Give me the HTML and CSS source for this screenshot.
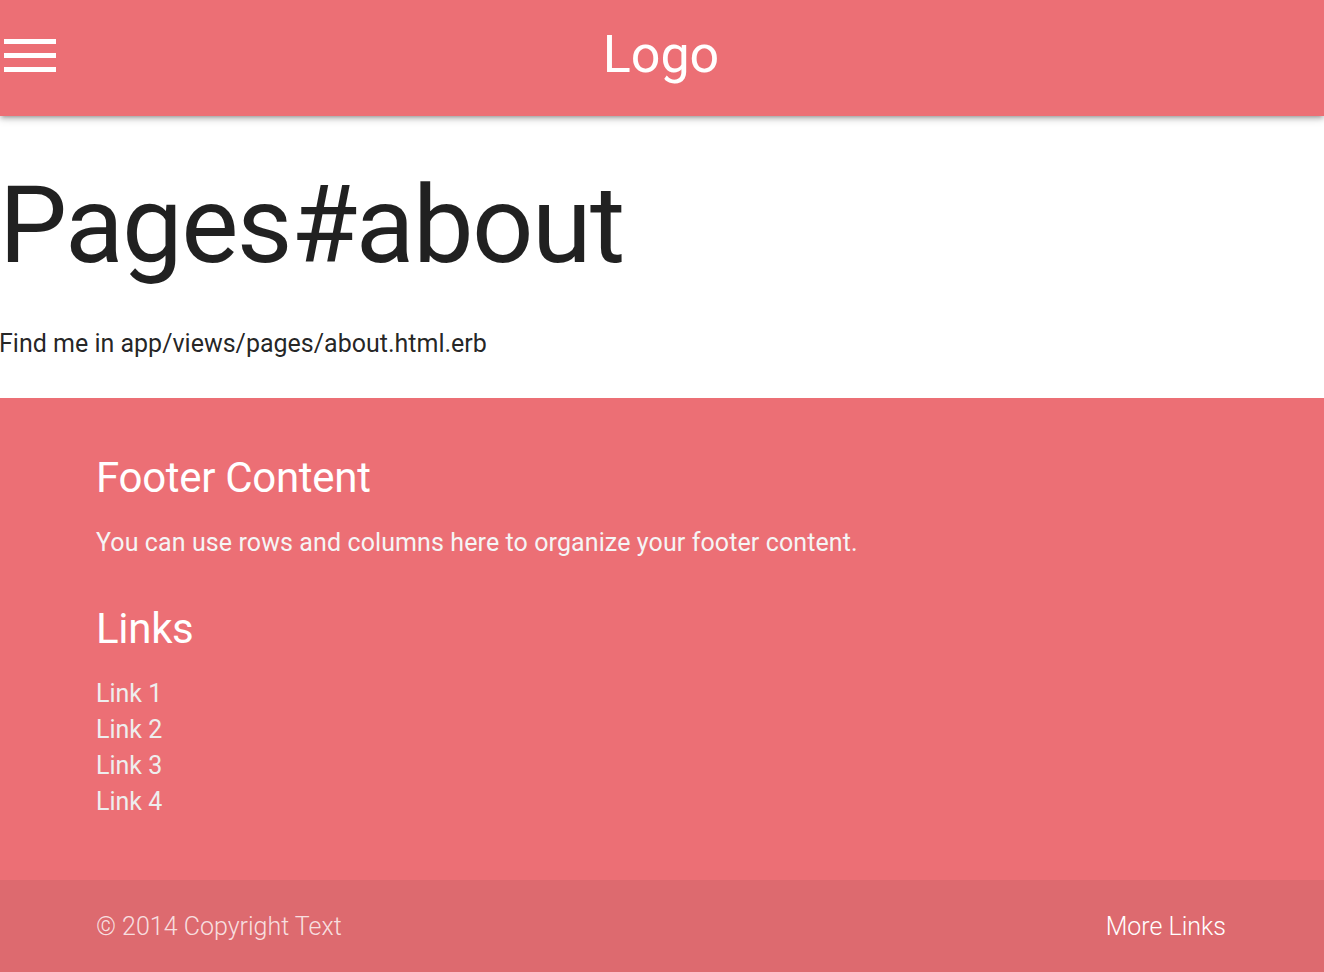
FILE: index.html
```html
<!DOCTYPE html>
<html lang="en">
<head>
    <meta charset="UTF-8">
    <meta name="viewport" content="width=device-width, initial-scale=1.0">
    <title>Pages#about</title>
    <link rel="stylesheet" href="styles.css">
</head>
<body>
    <nav class="nav">
        <a href="#" class="menu-toggle" aria-label="Menu">
            <span></span>
            <span></span>
            <span></span>
        </a>
        <a href="#" class="brand-logo">Logo</a>
        <div class="nav-spacer"></div>
    </nav>

    <main class="content">
        <h1>Pages#about</h1>
        <p>Find me in app/views/pages/about.html.erb</p>
    </main>

    <footer class="page-footer">
        <div class="footer-main">
            <h5>Footer Content</h5>
            <p class="footer-text">You can use rows and columns here to organize your footer content.</p>
            <h5 class="links-title">Links</h5>
            <ul class="footer-links">
                <li><a href="#">Link 1</a></li>
                <li><a href="#">Link 2</a></li>
                <li><a href="#">Link 3</a></li>
                <li><a href="#">Link 4</a></li>
            </ul>
        </div>
        <div class="footer-copyright">
            <span>© 2014 Copyright Text</span>
            <a href="#">More Links</a>
        </div>
    </footer>
</body>
</html>
```

FILE: styles.css
```css
body {
    font-family: Roboto, "Liberation Sans", sans-serif;
    margin: 0;
    background: #fff;
    color: rgba(0, 0, 0, 0.87);
    overflow: hidden;
}

a {
    text-decoration: none;
}

.nav {
    display: grid;
    grid-template-columns: 1fr auto 1fr;
    height: 116px;
    background-color: #ec6f75;
    box-shadow: 0 3px 4px 0 rgba(0, 0, 0, 0.14), 0 4px 2px -3px rgba(0, 0, 0, 0.12), 0 2px 9px 0 rgba(0, 0, 0, 0.2);
    position: relative;
    z-index: 1;
}

.menu-toggle {
    display: flex;
    flex-direction: column;
    gap: 9px;
    width: 52px;
    margin: 39px 0 0 4px;
    align-self: start;
}

.menu-toggle span {
    display: block;
    height: 5px;
    background: #fff;
}

.brand-logo {
    color: #fff;
    font-size: 52px;
    line-height: 110px;
    margin-left: -2px;
}

h1 {
    font-size: 108px;
    font-weight: 400;
    line-height: 1.1;
    margin: 50px 0 41px -1px;
    letter-spacing: -1.6px;
}

.content p {
    font-size: 25px;
    line-height: 36px;
    margin: 0 0 36px -1px;
}

.page-footer {
    background-color: #ec6f75;
}

.footer-main {
    padding: 57px 96px 60px;
}

h5 {
    color: #fff;
    font-size: 42px;
    font-weight: 400;
    line-height: 1.1;
    margin: 0 0 24px;
    letter-spacing: -0.3px;
}

.footer-text {
    color: #f5f5f5;
    font-size: 25px;
    line-height: 36px;
    margin: 0 0 45px;
    letter-spacing: 0.1px;
}

.links-title {
    margin-bottom: 24px;
}

.footer-links {
    list-style: none;
    margin: 0;
    padding: 0;
}

.footer-links a {
    color: #eeeeee;
    font-size: 25px;
    line-height: 36px;
}

.footer-copyright {
    display: flex;
    justify-content: space-between;
    padding: 29px 98px 27px 96px;
    background-color: rgba(51, 51, 51, 0.08);
    color: rgba(255, 255, 255, 0.8);
    font-size: 25px;
    font-weight: 300;
    line-height: 36px;
}

.footer-copyright a {
    color: #fff;
}
```
